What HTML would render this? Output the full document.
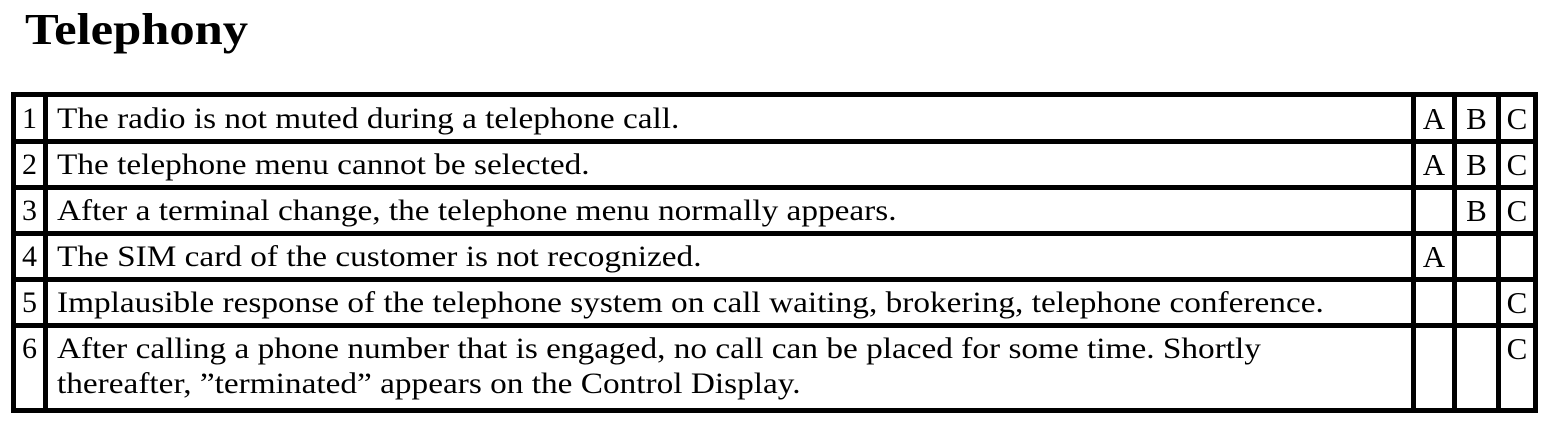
<!DOCTYPE html><html><head><style>
body{margin:0;width:1568px;height:424px;background:#fff;position:relative;overflow:hidden;font-family:"Liberation Serif",serif;color:#000}
.h{position:absolute;left:11px;width:1527px;height:5px;background:#000}
.v{position:absolute;top:92px;height:321px;width:5px;background:#000}
.t{position:absolute;font-size:30px;line-height:42px;white-space:nowrap}
.s{transform:scaleX(1.11);transform-origin:0 0}
.n{width:27px;left:16px;text-align:center}
.c{text-align:center;font-size:31px}
</style></head><body>
<div style="position:absolute;left:25px;top:2px;font-size:44px;font-weight:bold;line-height:56px;transform:scaleX(1.15);transform-origin:0 0">Telephony</div>
<div class="h" style="top:92px"></div><div class="h" style="top:139px"></div><div class="h" style="top:185px"></div><div class="h" style="top:231px"></div><div class="h" style="top:277px"></div><div class="h" style="top:323px"></div><div class="h" style="top:408px"></div>
<div class="v" style="left:11px"></div><div class="v" style="left:43px"></div><div class="v" style="left:1411px"></div><div class="v" style="left:1452px"></div><div class="v" style="left:1496px"></div><div class="v" style="left:1533px"></div>

<div class="t n" style="top:98px">1</div><div class="t s" style="left:57px;top:98px">The radio is not muted during a telephone call.</div>
<div class="t c" style="left:1416px;width:36px;top:98px">A</div><div class="t c" style="left:1457px;width:39px;top:98px">B</div><div class="t c" style="left:1501px;width:32px;top:98px">C</div>

<div class="t n" style="top:144px">2</div><div class="t s" style="left:57px;top:144px">The telephone menu cannot be selected.</div>
<div class="t c" style="left:1416px;width:36px;top:144px">A</div><div class="t c" style="left:1457px;width:39px;top:144px">B</div><div class="t c" style="left:1501px;width:32px;top:144px">C</div>

<div class="t n" style="top:190px">3</div><div class="t s" style="left:57px;top:190px">After a terminal change, the telephone menu normally appears.</div>
<div class="t c" style="left:1457px;width:39px;top:190px">B</div><div class="t c" style="left:1501px;width:32px;top:190px">C</div>

<div class="t n" style="top:236px">4</div><div class="t s" style="left:57px;top:236px">The SIM card of the customer is not recognized.</div>
<div class="t c" style="left:1416px;width:36px;top:236px">A</div>

<div class="t n" style="top:282px">5</div><div class="t s" style="left:57px;top:282px">Implausible response of the telephone system on call waiting, brokering, telephone conference.</div>
<div class="t c" style="left:1501px;width:32px;top:282px">C</div>

<div class="t n" style="top:331px;line-height:35px">6</div><div class="t s" style="left:57px;top:331px;line-height:35px">After calling a phone number that is engaged, no call can be placed for some time. Shortly<br>thereafter, ”terminated” appears on the Control Display.</div>
<div class="t c" style="left:1501px;width:32px;top:331px;line-height:35px">C</div>
</body></html>
